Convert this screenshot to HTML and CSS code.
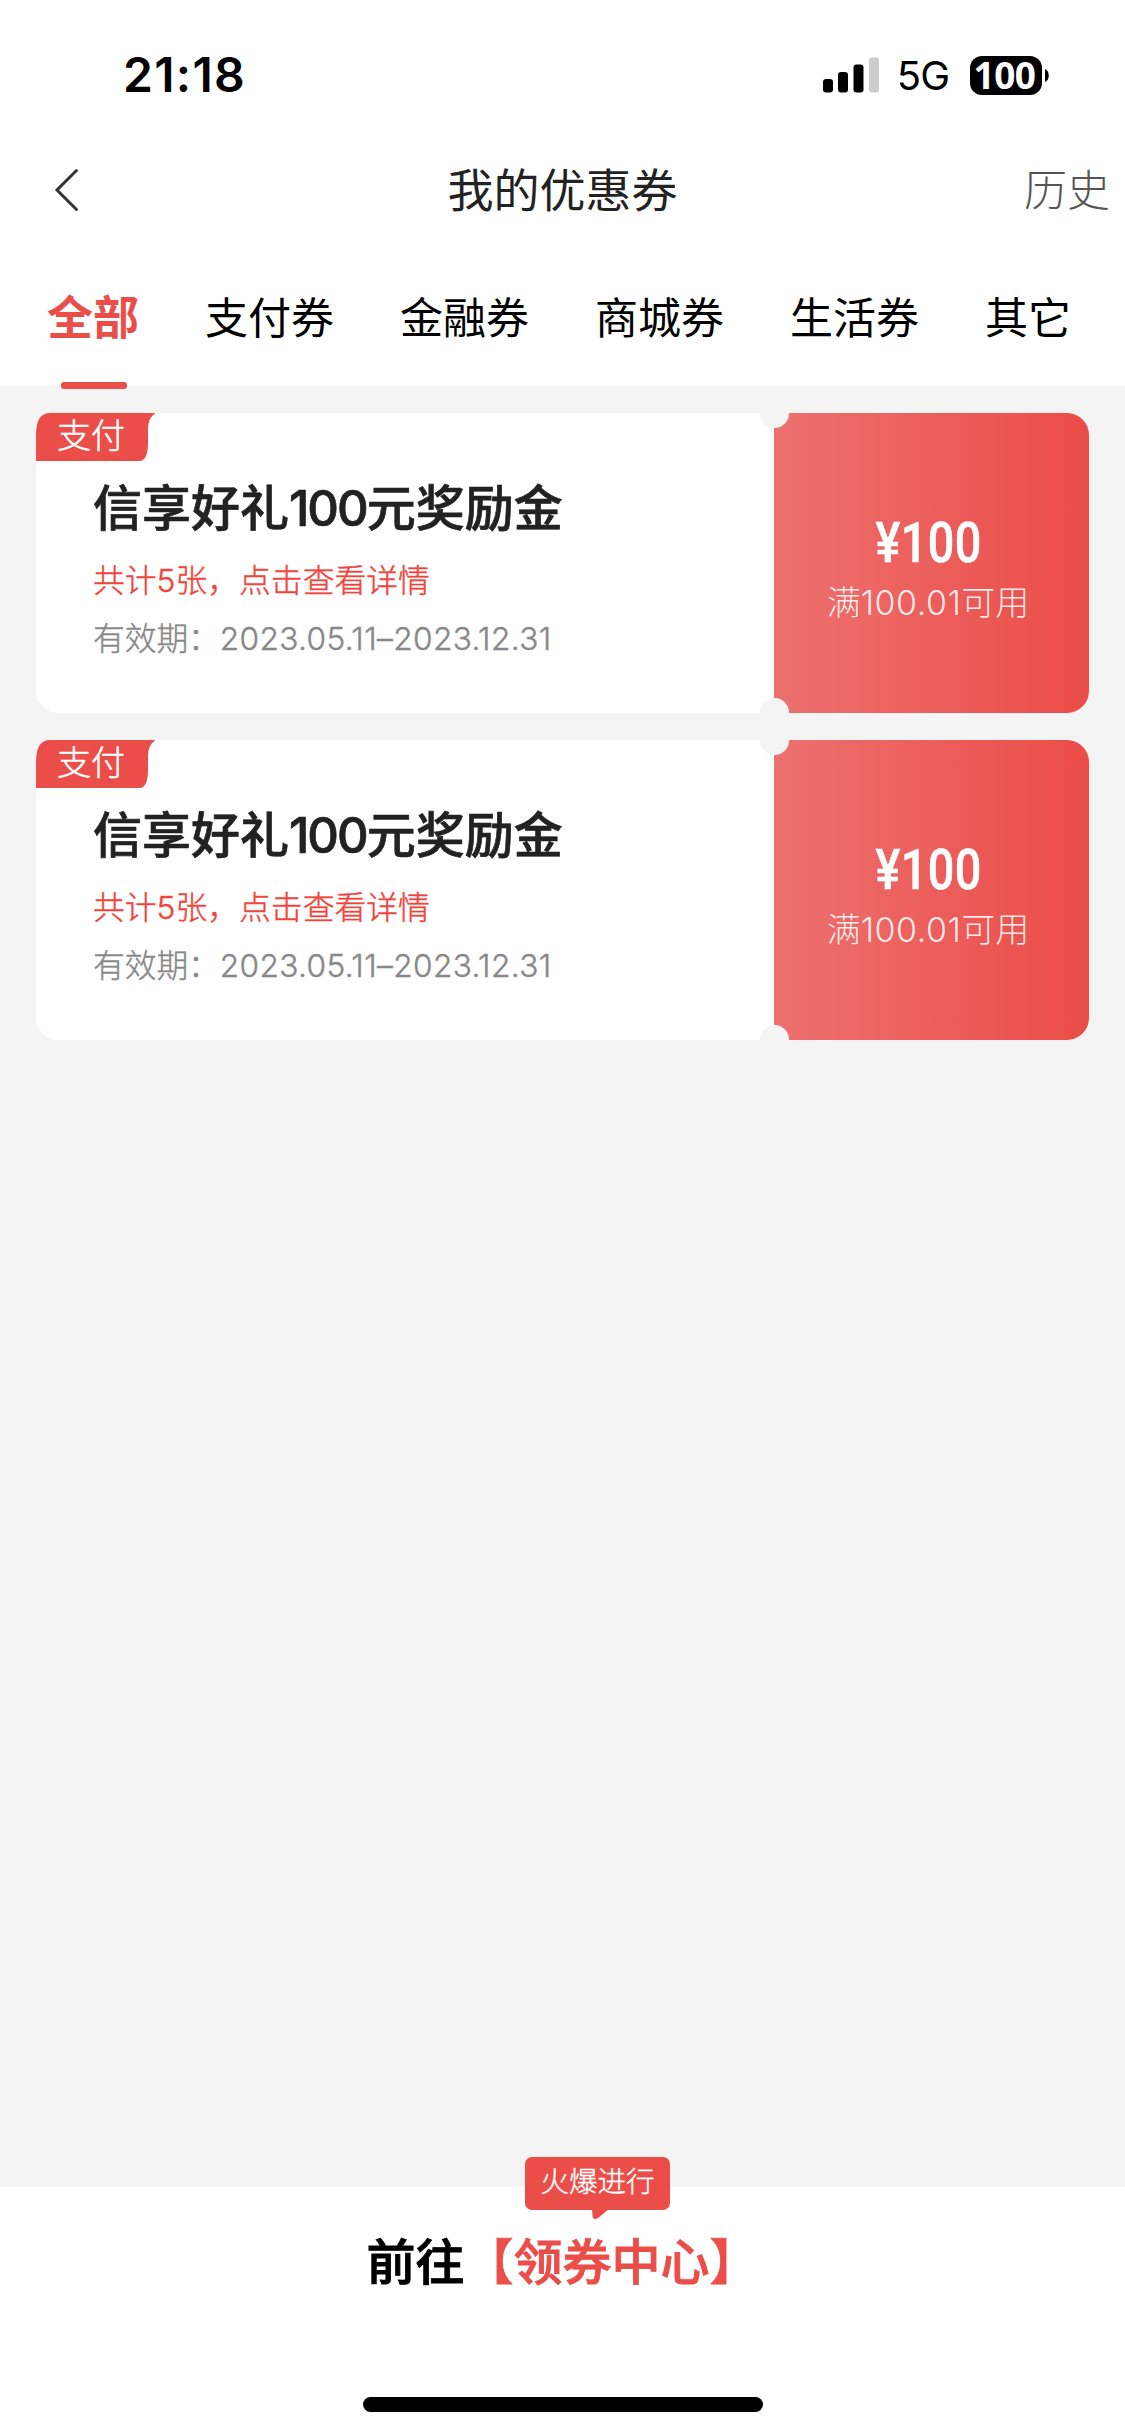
FILE: index.html
```html
<!DOCTYPE html>
<html lang="zh-CN">
<head>
  <meta charset="UTF-8" />
  <meta name="viewport" content="width=device-width, initial-scale=1" />
  <title>我的优惠券</title>
  <link rel="stylesheet" href="styles.css">
</head>

<body>
  <!-- 状态栏 -->
  <div class="status-bar">
    <span class="time">21:18</span>
    <div class="status-icons">
      <svg class="signal" width="56" height="36" viewBox="0 0 56 36">
        <rect x="0" y="22" width="10" height="13.5" rx="3" />
        <rect x="15" y="15" width="10" height="20.5" rx="3" />
        <rect x="30.5" y="7.5" width="10" height="28" rx="3" />
        <rect x="46" y="0.5" width="10" height="35" rx="3" fill="#ccc" />
      </svg>
      <span class="network">5G</span>
      <div class="battery"><span>100</span></div>
      <svg class="battery-cap" width="4" height="13" viewBox="0 0 4 13">
        <path d="M0 0C5 2 5 11 0 13Z" />
      </svg>
    </div>
  </div>

  <!-- 导航栏 -->
  <header class="nav-bar">
    <svg class="back" width="26" height="44" viewBox="0 0 26 44">
      <path d="M23.500 2.500L4 22L23.500 41.500" fill="none" stroke="#333" stroke-width="3" stroke-linecap="round" />
    </svg>
    <h1>我的优惠券</h1>
    <a class="history">历史</a>
  </header>

  <!-- 分类 -->
  <nav class="tabs">
    <a class="tab active">全部</a>
    <a class="tab">支付券</a>
    <a class="tab">金融券</a>
    <a class="tab">商城券</a>
    <a class="tab">生活券</a>
    <a class="tab">其它</a>
  </nav>

  <!-- 优惠券列表 -->
  <main class="coupon-list">
    <div class="coupon">
      <div class="coupon-info">
        <div class="tag">
          <svg width="120" height="48" viewBox="0 0 120 48">
            <path d="M0 48V22Q0 0 14 0H119.500Q112 5 112 16V30Q112 48 103 48Z" fill="#eb4e49" />
          </svg>
          <span>支付</span>
        </div>
        <h2>信享好礼<span class="num">100</span>元奖励金</h2>
        <p class="count">共计5张，点击查看详情</p>
        <p class="date">有效期：<span>2023.05.11–2023.12.31</span></p>
      </div>
      <div class="coupon-value">
        <div class="amount">¥100</div>
        <div class="limit">满<span>100.01</span>可用</div>
      </div>
    </div>

    <div class="coupon">
      <div class="coupon-info">
        <div class="tag">
          <svg width="120" height="48" viewBox="0 0 120 48">
            <path d="M0 48V22Q0 0 14 0H119.500Q112 5 112 16V30Q112 48 103 48Z" fill="#eb4e49" />
          </svg>
          <span>支付</span>
        </div>
        <h2>信享好礼<span class="num">100</span>元奖励金</h2>
        <p class="count">共计5张，点击查看详情</p>
        <p class="date">有效期：<span>2023.05.11–2023.12.31</span></p>
      </div>
      <div class="coupon-value">
        <div class="amount">¥100</div>
        <div class="limit">满<span>100.01</span>可用</div>
      </div>
    </div>
  </main>

  <!-- 底部 -->
  <footer class="footer">
    <div class="bubble">
      火爆进行
      <svg width="17" height="11" viewBox="0 0 17 11">
        <path d="M0 0H17L6 9Q1 12 0.500 7Z" fill="#eb4e49" />
      </svg>
    </div>
    <div class="center-link">前往<span>【领券中心】</span></div>
    <div class="home-bar"></div>
  </footer>
</body>
</html>
```
FILE: styles.css
```css
* {
  box-sizing: border-box;
}

body {
  margin: 0;
  width: 1125px;
  height: 2435px;
  display: flex;
  flex-direction: column;
  overflow: hidden;
  background: #f4f4f4;
  color: #000;
  font-family: Inter, "Noto Sans CJK SC", sans-serif;
}

h1, h2, p {
  margin: 0;
  font-weight: 400;
}

/* 状态栏 */
.status-bar {
  height: 132px;
  padding: 18px 76px 0 123px;
  display: flex;
  align-items: center;
  justify-content: space-between;
  background: #fff;
}

.time {
  font-size: 48px;
  font-weight: 600;
  line-height: 60px;
  letter-spacing: 1.3px;
}

.status-icons {
  display: flex;
  align-items: center;
}

.network {
  margin: 2px 21px 0 18px;
  font-size: 40px;
  line-height: 48px;
  letter-spacing: -1px;
}

.battery {
  width: 72px;
  height: 39px;
  border-radius: 12px;
  background: #000;
  color: #fff;
  text-align: center;
  font-family: "Noto Sans", sans-serif;
  font-size: 37px;
  font-weight: 700;
  line-height: 38px;
  letter-spacing: -0.5px;
}

.battery span {
  margin-left: -3px;
}

.battery-cap {
  margin-left: 3px;
}

/* 导航栏 */
.nav-bar {
  height: 118px;
  padding: 0 15px 2px 53px;
  display: grid;
  grid-template-columns: 1fr auto 1fr;
  align-items: center;
  background: #fff;
}

.nav-bar h1 {
  margin-left: -38px;
  font-size: 46px;
  line-height: 66px;
  color: #222;
}

.nav-bar .history {
  justify-self: end;
  font-size: 43px;
  font-weight: 300;
  line-height: 64px;
  color: #555;
}

/* 分类 */
.tabs {
  height: 136px;
  padding: 0 54px 0 47px;
  display: flex;
  justify-content: space-between;
  background: #fff;
}

.tab {
  height: 136px;
  font-size: 43px;
  line-height: 137px;
}

.tab.active {
  position: relative;
  font-size: 46px;
  font-weight: 700;
  line-height: 134px;
  color: #eb4e49;
}

.tab.active::after {
  content: "";
  position: absolute;
  left: 14px;
  bottom: -3px;
  width: 66px;
  height: 7px;
  border-radius: 3px;
  background: #eb4e49;
}

/* 优惠券 */
.coupon-list {
  flex: 1;
  padding: 27px 36px 0;
  display: flex;
  flex-direction: column;
  gap: 27px;
}

.coupon {
  position: relative;
  height: 300px;
  display: flex;
  border-radius: 22px;
  background: #fff;
}

/* 票券缺口 */
.coupon::before,
.coupon::after {
  content: "";
  position: absolute;
  left: 724px;
  width: 29px;
  height: 29px;
  border-radius: 50%;
  background: #f4f4f4;
}

.coupon::before {
  top: -14px;
}

.coupon::after {
  bottom: -14px;
}

.coupon-info {
  width: 738px;
}

.tag {
  position: relative;
  height: 48px;
}

.tag svg {
  display: block;
}

.tag span {
  position: absolute;
  left: 21px;
  top: 0;
  font-size: 34px;
  font-weight: 300;
  line-height: 45px;
  color: #fff;
  -webkit-text-stroke: 0.5px #fff;
}

.coupon-info h2 {
  margin: 16px 0 0 57px;
  font-size: 49px;
  font-weight: 500;
  line-height: 64px;
  color: #222;
  -webkit-text-stroke: 0.7px #222;
}

.coupon-info h2 .num {
  letter-spacing: -2px;
}

.count {
  margin: 16px 0 0 57px;
  font-size: 31.8px;
  font-weight: 300;
  line-height: 48px;
  color: #f0443c;
  -webkit-text-stroke: 0.4px #f0443c;
}

.date {
  margin: 10px 0 0 57px;
  font-size: 31.7px;
  font-weight: 300;
  line-height: 48px;
  color: #888;
  -webkit-text-stroke: 0.4px #888;
}

.date span {
  letter-spacing: 0.35px;
}

.coupon-value {
  width: 315px;
  padding-top: 98px;
  border-radius: 0 22px 22px 0;
  background: linear-gradient(90deg, #ed7170, #eb4c47);
  color: #fff;
  text-align: center;
}

.amount {
  margin-left: -6px;
  font-family: Roboto, sans-serif;
  font-size: 55px;
  font-weight: 500;
  line-height: 64px;
  letter-spacing: 0.5px;
  transform: scaleX(0.85);
  -webkit-text-stroke: 0.6px #fff;
}

.limit {
  margin: 2px 0 0 -7px;
  font-size: 34px;
  font-weight: 300;
  line-height: 52px;
  color: rgba(255, 255, 255, 0.88);
}

.limit span {
  letter-spacing: 0.5px;
}

/* 底部 */
.footer {
  position: relative;
  height: 248px;
  padding-top: 43px;
  background: #fff;
  text-align: center;
}

.bubble {
  position: absolute;
  left: 525px;
  top: -30px;
  width: 145px;
  height: 53px;
  border-radius: 7px;
  background: #eb4e49;
  color: #fff;
  font-size: 28.5px;
  font-weight: 300;
  line-height: 50px;
  -webkit-text-stroke: 0.4px #fff;
}

.bubble svg {
  position: absolute;
  left: 67px;
  top: 52px;
}

.center-link {
  font-size: 49px;
  font-weight: 500;
  line-height: 66px;
  -webkit-text-stroke: 0.9px currentColor;
}

.center-link span {
  color: #eb4e49;
}

.home-bar {
  width: 400px;
  height: 15px;
  margin: 101px auto 0;
  border-radius: 8px;
  background: #000;
}
```
